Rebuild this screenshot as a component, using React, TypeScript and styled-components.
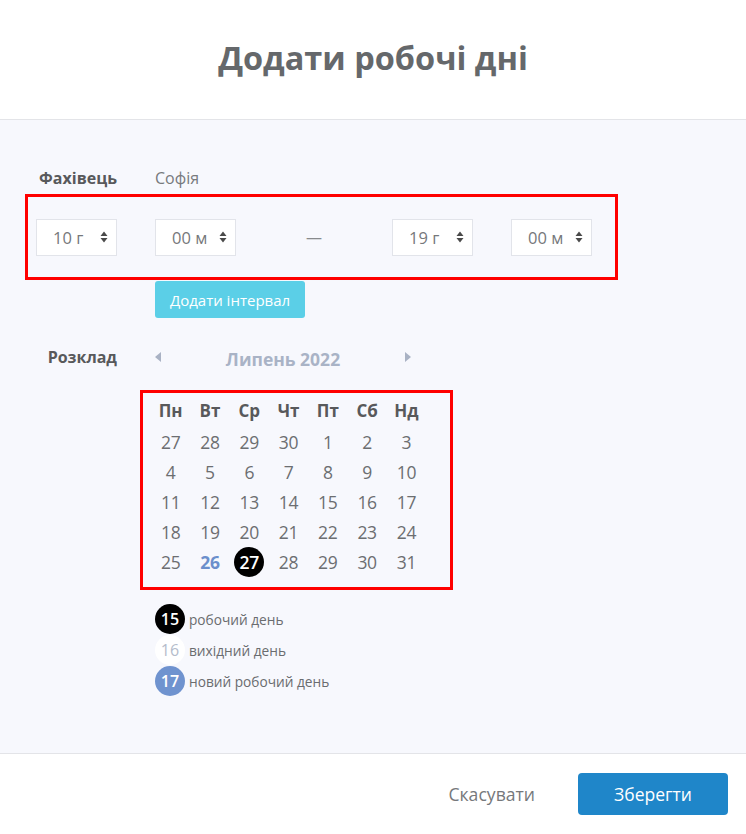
import styled, { createGlobalStyle } from "styled-components";

const GlobalStyle = createGlobalStyle`
    body {
        margin: 0;
        font-family: "Open Sans", "Liberation Sans", sans-serif;
        background-color: #ffffff;
    }
`;

const weekDays = ["Пн", "Вт", "Ср", "Чт", "Пт", "Сб", "Нд"];

const weeks = [
    [27, 28, 29, 30, 1, 2, 3],
    [4, 5, 6, 7, 8, 9, 10],
    [11, 12, 13, 14, 15, 16, 17],
    [18, 19, 20, 21, 22, 23, 24],
    [25, 26, 27, 28, 29, 30, 31],
];

type DayKind = "plain" | "today" | "work";

const dayKind = (week: number, day: number): DayKind => {
    if (week === 4 && day === 26) return "today";
    if (week === 4 && day === 27) return "work";
    return "plain";
};

const SortIcon = () => (
    <svg width="8" height="12" viewBox="0 0 8 12">
        <path fill="currentColor" d="M4 0.5L7.5 5H0.5z M4 11.5L0.5 7H7.5z" />
    </svg>
);

const Arrow = ({ dir }: { dir: "left" | "right" }) => (
    <svg width="6" height="10" viewBox="0 0 6 10">
        <path fill="currentColor" d={dir === "left" ? "M6 0V10L0 5z" : "M0 0V10L6 5z"} />
    </svg>
);

const TimeSelect = ({ value }: { value: string }) => (
    <Select>
        <span>{value}</span>
        <SortIcon />
    </Select>
);

export default function App() {
    return (
        <>
            <GlobalStyle />
            <Modal>
                <Header>
                    <Title>Додати робочі дні</Title>
                </Header>
                <Body>
                    <FieldRow>
                        <Label>Фахівець</Label>
                        <Value>Софія</Value>
                    </FieldRow>
                    <TimeRow>
                        <TimeSelect value="10 г" />
                        <TimeSelect value="00 м" />
                        <Dash>—</Dash>
                        <TimeSelect value="19 г" />
                        <TimeSelect value="00 м" />
                    </TimeRow>
                    <IntervalButton>Додати інтервал</IntervalButton>
                    <ScheduleRow>
                        <Label>Розклад</Label>
                        <MonthNav>
                            <NavArrow>
                                <Arrow dir="left" />
                            </NavArrow>
                            <MonthName>Липень 2022</MonthName>
                            <NavArrow>
                                <Arrow dir="right" />
                            </NavArrow>
                        </MonthNav>
                    </ScheduleRow>
                    <Calendar>
                        {weekDays.map((d) => (
                            <WeekDay key={d}>{d}</WeekDay>
                        ))}
                        {weeks.map((week, wi) =>
                            week.map((day) => (
                                <DayCell key={`${wi}-${day}`}>
                                    <Day $kind={dayKind(wi, day)}>{day}</Day>
                                </DayCell>
                            ))
                        )}
                    </Calendar>
                    <Legend>
                        <LegendItem>
                            <LegendDot $kind="work">15</LegendDot>
                            <span>робочий день</span>
                        </LegendItem>
                        <LegendItem>
                            <LegendDot $kind="off">16</LegendDot>
                            <span>вихідний день</span>
                        </LegendItem>
                        <LegendItem>
                            <LegendDot $kind="new">17</LegendDot>
                            <span>новий робочий день</span>
                        </LegendItem>
                    </Legend>
                </Body>
                <Footer>
                    <CancelButton>Скасувати</CancelButton>
                    <SaveButton>Зберегти</SaveButton>
                </Footer>
            </Modal>
        </>
    );
}

const Modal = styled.div`
    width: 746px;
    height: 834px;
    display: flex;
    flex-direction: column;
    background-color: #ffffff;
`;

const Header = styled.div`
    box-sizing: border-box;
    height: 120px;
    padding-bottom: 5px;
    display: flex;
    justify-content: center;
    align-items: center;
    border-bottom: 1px solid #e3e4e8;
`;

const Title = styled.h1`
    margin: 0;
    font-size: 32.5px;
    font-weight: 700;
    color: #65686b;
`;

const Body = styled.div`
    height: 634px;
    box-sizing: border-box;
    padding-top: 48px;
    background-color: #f7f8fd;
    border-bottom: 1px solid #e3e4e8;
`;

const FieldRow = styled.div`
    display: flex;
    align-items: center;
    height: 20px;
`;

const Label = styled.div`
    width: 117px;
    text-align: right;
    font-size: 16px;
    font-weight: 700;
    color: #58595b;
`;

const Value = styled.div`
    margin-left: 38px;
    font-size: 16px;
    color: #777a7d;
`;

const TimeRow = styled.div`
    box-sizing: border-box;
    width: 593px;
    height: 86px;
    margin: 6px 0 0 25px;
    padding: 0 0 0 8px;
    display: flex;
    align-items: center;
    gap: 38px;
    border: 3px solid #ff0000;
`;

const Select = styled.div`
    box-sizing: border-box;
    width: 81px;
    height: 37px;
    padding: 0 8px 0 16px;
    display: flex;
    justify-content: space-between;
    align-items: center;
    background-color: #ffffff;
    border: 1px solid #e2e4ea;
    font-size: 16.5px;
    color: #76787b;

    svg {
        color: #4a4a4a;
    }
`;

const Dash = styled.div`
    width: 80px;
    text-align: center;
    font-size: 16px;
    color: #888a8d;
`;

const IntervalButton = styled.button`
    display: block;
    width: 150px;
    height: 37px;
    margin: 1px 0 0 155px;
    padding: 0;
    border: 0;
    border-radius: 3px;
    background-color: #5bcfe7;
    color: #ffffff;
    font-family: inherit;
    font-size: 15px;
`;

const ScheduleRow = styled.div`
    display: flex;
    align-items: center;
    height: 22px;
    margin-top: 28px;
`;

const MonthNav = styled.div`
    margin-left: 38px;
    width: 256px;
    display: flex;
    justify-content: space-between;
    align-items: center;
`;

const NavArrow = styled.div`
    display: flex;
    color: #a9b2c4;
`;

const MonthName = styled.div`
    margin-top: 3px;
    font-size: 17.5px;
    font-weight: 700;
    color: #a9b3c6;
`;

const Calendar = styled.div`
    box-sizing: border-box;
    width: 313px;
    margin: 22px 0 0 140px;
    padding: 1px 0 10px 8px;
    display: grid;
    grid-template-columns: repeat(7, 39.3px);
    grid-template-rows: 33px repeat(5, 30px);
    border: 3px solid #ff0000;
`;

const WeekDay = styled.div`
    display: flex;
    justify-content: center;
    align-items: center;
    font-size: 17px;
    font-weight: 700;
    color: #58595b;
`;

const DayCell = styled.div`
    display: flex;
    justify-content: center;
    align-items: center;
`;

const Day = styled.div<{ $kind: DayKind }>`
    width: 30px;
    height: 30px;
    display: flex;
    justify-content: center;
    align-items: center;
    border-radius: 50%;
    font-size: 17.5px;
    letter-spacing: -0.3px;
    font-weight: ${(p) => (p.$kind === "plain" ? 400 : p.$kind === "work" ? 600 : 700)};
    color: ${(p) => (p.$kind === "today" ? "#6b8fcc" : p.$kind === "work" ? "#ffffff" : "#6c6e71")};
    background-color: ${(p) => (p.$kind === "work" ? "#000000" : "transparent")};
`;

const Legend = styled.div`
    margin: 14px 0 0 155px;
    display: flex;
    flex-direction: column;
    gap: 1px;
`;

const LegendItem = styled.div`
    display: flex;
    align-items: center;
    gap: 4px;
    font-size: 13.7px;
    color: #6a6c6f;
`;

const LegendDot = styled.div<{ $kind: "work" | "off" | "new" }>`
    width: 30px;
    height: 30px;
    display: flex;
    justify-content: center;
    align-items: center;
    border-radius: 50%;
    font-size: 16px;
    font-weight: ${(p) => (p.$kind === "off" ? 400 : 600)};
    color: ${(p) => (p.$kind === "off" ? "#b4bccb" : "#ffffff")};
    background-color: ${(p) =>
        p.$kind === "work" ? "#000000" : p.$kind === "new" ? "#6f93cf" : "#ffffff"};
`;

const Footer = styled.div`
    flex: 1;
    display: flex;
    justify-content: flex-end;
    align-items: center;
    padding-right: 18px;
    gap: 43px;
`;

const CancelButton = styled.button`
    padding: 0;
    border: 0;
    background: none;
    font-family: inherit;
    font-size: 17.6px;
    color: #76787b;
`;

const SaveButton = styled.button`
    width: 150px;
    height: 42px;
    padding: 0;
    border: 0;
    border-radius: 4px;
    background-color: #1f86c9;
    color: #ffffff;
    font-family: inherit;
    font-size: 17.5px;
`;
